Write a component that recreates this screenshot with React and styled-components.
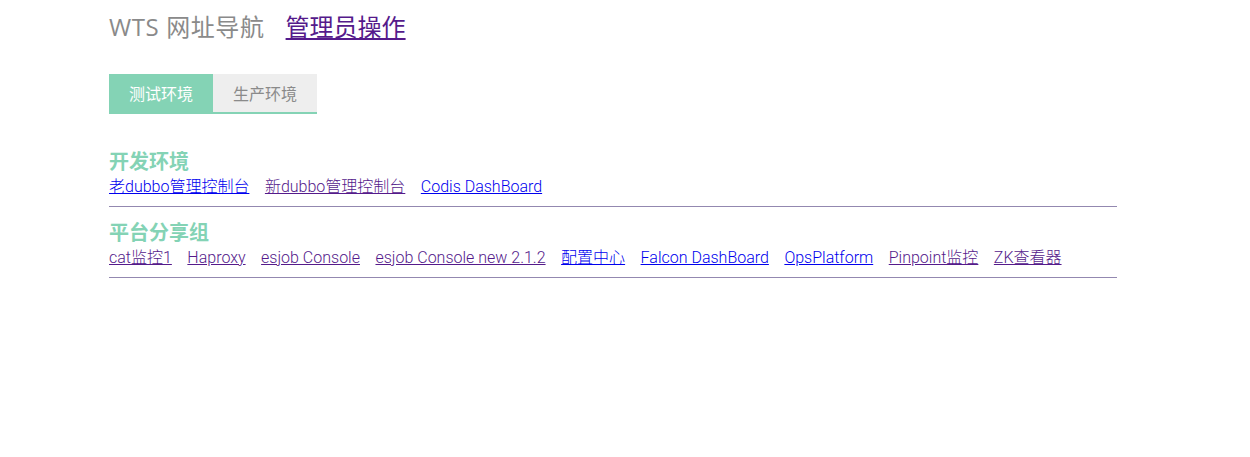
import React, { useState } from "react";
import styled, { createGlobalStyle } from "styled-components";

const Global = createGlobalStyle`
  html, body { margin: 0; padding: 0; background: #fff; }
  body { font-family: Roboto, "Noto Sans CJK SC", sans-serif; }
`;

const Page = styled.div`
  width: 1008px;
  margin-left: 109px;
  padding-top: 9px;
`;

const Header = styled.header`
  display: flex;
  align-items: center;
  gap: 21px;
  height: 36px;
`;

const Brand = styled.h1`
  margin: 0;
  font-family: "Open Sans", "Noto Sans CJK SC", sans-serif;
  font-weight: 400;
  font-size: 24px;
  line-height: 36px;
  letter-spacing: 0.6px;
  color: #8a8a8a;
`;

const AdminLink = styled.a`
  font-family: "Open Sans", "Noto Sans CJK SC", sans-serif;
  font-size: 24px;
  line-height: 36px;
  color: #551a8b;
  text-decoration: underline;
`;

const TabBar = styled.div`
  display: inline-flex;
  margin-top: 29px;
  border-bottom: 2px solid #84d3b5;
`;

const Tab = styled.button`
  width: 104px;
  height: 38px;
  border: none;
  padding: 0;
  font-family: Roboto, "Noto Sans CJK SC", sans-serif;
  font-size: 16px;
  cursor: pointer;
  background: ${(p) => (p.$active ? "#84d3b5" : "#eeeeee")};
  color: ${(p) => (p.$active ? "#ffffff" : "#8a8a8a")};
`;

const Section = styled.section`
  margin-top: ${(p) => (p.$first ? "33px" : "11px")};
  border-bottom: 1px solid #9388b0;
  padding-bottom: 6px;
`;

const SectionTitle = styled.h2`
  margin: 0;
  font-family: "Noto Sans CJK SC", sans-serif;
  font-size: 20px;
  font-weight: 700;
  line-height: 27px;
  color: #84d3b5;
`;

const LinkRow = styled.div`
  display: flex;
  flex-wrap: wrap;
  gap: 15.5px;
  line-height: 26px;
`;

const NavLink = styled.a`
  font-family: Roboto, "Noto Sans CJK SC", sans-serif;
  font-size: 16px;
  font-weight: 300;
  color: ${(p) => (p.$visited ? "#551a8b" : "#0000ee")};
  text-decoration: underline;
`;

const groups = [
  {
    title: "开发环境",
    links: [
      ["老dubbo管理控制台", false],
      ["新dubbo管理控制台", true],
      ["Codis DashBoard", false],
    ],
  },
  {
    title: "平台分享组",
    links: [
      ["cat监控1", true],
      ["Haproxy", true],
      ["esjob Console", true],
      ["esjob Console new 2.1.2", true],
      ["配置中心", false],
      ["Falcon DashBoard", false],
      ["OpsPlatform", false],
      ["Pinpoint监控", true],
      ["ZK查看器", true],
    ],
  },
];

export default function App() {
  const [tab, setTab] = useState(0);
  return (
    <>
      <Global />
      <Page>
        <Header>
          <Brand>WTS 网址导航</Brand>
          <AdminLink href="#admin">管理员操作</AdminLink>
        </Header>
        <TabBar>
          <Tab $active={tab === 0} onClick={() => setTab(0)}>测试环境</Tab>
          <Tab $active={tab === 1} onClick={() => setTab(1)}>生产环境</Tab>
        </TabBar>
        {groups.map((g, i) => (
          <Section key={g.title} $first={i === 0}>
            <SectionTitle>{g.title}</SectionTitle>
            <LinkRow>
              {g.links.map(([label, visited]) => (
                <NavLink key={label} href="#" $visited={visited}>
                  {label}
                </NavLink>
              ))}
            </LinkRow>
          </Section>
        ))}
      </Page>
    </>
  );
}
